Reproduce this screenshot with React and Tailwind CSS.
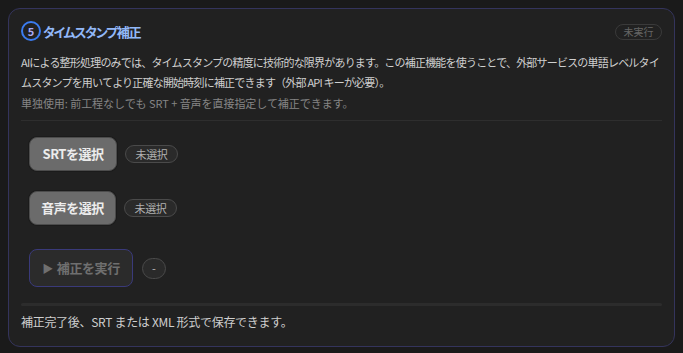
import React from "react";

const jp = { fontFamily: '"Noto Sans CJK JP", "Noto Sans", sans-serif' };

export default function App() {
  return (
    <div className="min-h-[353px] w-full bg-[#1a1a1a] pt-2 px-[8px] pb-[5px]" style={jp}>
      <div className="rounded-[12px] border border-[#34345c] bg-[#212121] pl-[12px] pr-[12px] pt-[12px] pb-[14px]">
        {/* header */}
        <div className="flex h-[20px] items-center">
          <div className="flex h-[20px] w-[20px] items-center justify-center rounded-full border-2 border-[#3b7cf0] text-[11px] font-bold leading-none text-[#a9a9f5]">
            5
          </div>
          <div className="ml-[2px] text-[13px] font-bold leading-none tracking-[-1.3px] text-[#92b8f8] [font-feature-settings:'palt']">
            タイムスタンプ補正
          </div>
          <div className="ml-auto mt-[1px] flex h-[16px] w-[47px] items-center justify-center rounded-full border border-[#3a3a3a] text-[10px] leading-none text-[#666]">
            未実行
          </div>
        </div>

        {/* description */}
        <p className="mt-[11px] text-[11px] leading-[20px] tracking-[-0.8px] text-[#cfcfcf]">
          AIによる整形処理のみでは、タイムスタンプの精度に技術的な限界があります。この補正機能を使うことで、外部サービスの単語レベルタイムスタンプを用いてより正確な開始時刻に補正できます（外部 API キーが必要）。
        </p>
        <p className="mt-[2px] text-[11px] leading-[18px] tracking-[-0.05px] text-[#858585]">
          単独使用: 前工程なしでも SRT + 音声を直接指定して補正できます。
        </p>

        <div className="mt-[8px] h-px bg-[#2e2e2e]" />

        {/* actions */}
        <div className="flex flex-col pl-[8px]">
          <div className="mt-[16px] flex items-center gap-[8px]">
            <button className="h-[34px] w-[88px] rounded-[8px] border border-[#4c4c4c] bg-[#6b6b6b] text-[13px] font-bold tracking-[-0.5px] text-[#ececec] shadow-[0_0_0_1px_#1b1b1b]">
              SRTを選択
            </button>
            <span className="flex h-[18px] w-[53px] items-center justify-center rounded-full border border-[#4a4a4a] bg-[#2a2a2a] text-[11px] leading-none tracking-[-0.4px] text-[#b0b0b0]">
              未選択
            </span>
          </div>
          <div className="mt-[20px] flex items-center gap-[8px]">
            <button className="h-[34px] w-[87px] rounded-[8px] border border-[#4c4c4c] bg-[#6b6b6b] text-[13px] font-bold tracking-[-0.5px] text-[#ececec] shadow-[0_0_0_1px_#1b1b1b]">
              音声を選択
            </button>
            <span className="flex h-[18px] w-[53px] items-center justify-center rounded-full border border-[#4a4a4a] bg-[#2a2a2a] text-[11px] leading-none tracking-[-0.4px] text-[#b0b0b0]">
              未選択
            </span>
          </div>
          <div className="mt-[24px] flex items-center gap-[9px]">
            <button className="flex h-[38px] w-[104px] items-center justify-center gap-[4px] rounded-[8px] border border-[#3a3a7a] bg-[#2b2b2b] text-[13px] font-bold tracking-[-0.4px] text-[#6f6f6f]">
              <span className="text-[11px]">▶</span>
              <span>補正を実行</span>
            </button>
            <span className="flex h-[21px] w-[24px] items-center justify-center rounded-full border border-[#4a4a4a] bg-[#2a2a2a] text-[11px] leading-none text-[#bbbbbb]">
              -
            </span>
          </div>
        </div>

        <div className="mt-[16px] h-[3px] rounded-full bg-[#2c2c2c]" />

        <p className="mt-[6px] text-[12px] leading-[20px] tracking-[-0.3px] text-[#cfcfcf]">
          補正完了後、SRT または XML 形式で保存できます。
        </p>
      </div>
    </div>
  );
}
